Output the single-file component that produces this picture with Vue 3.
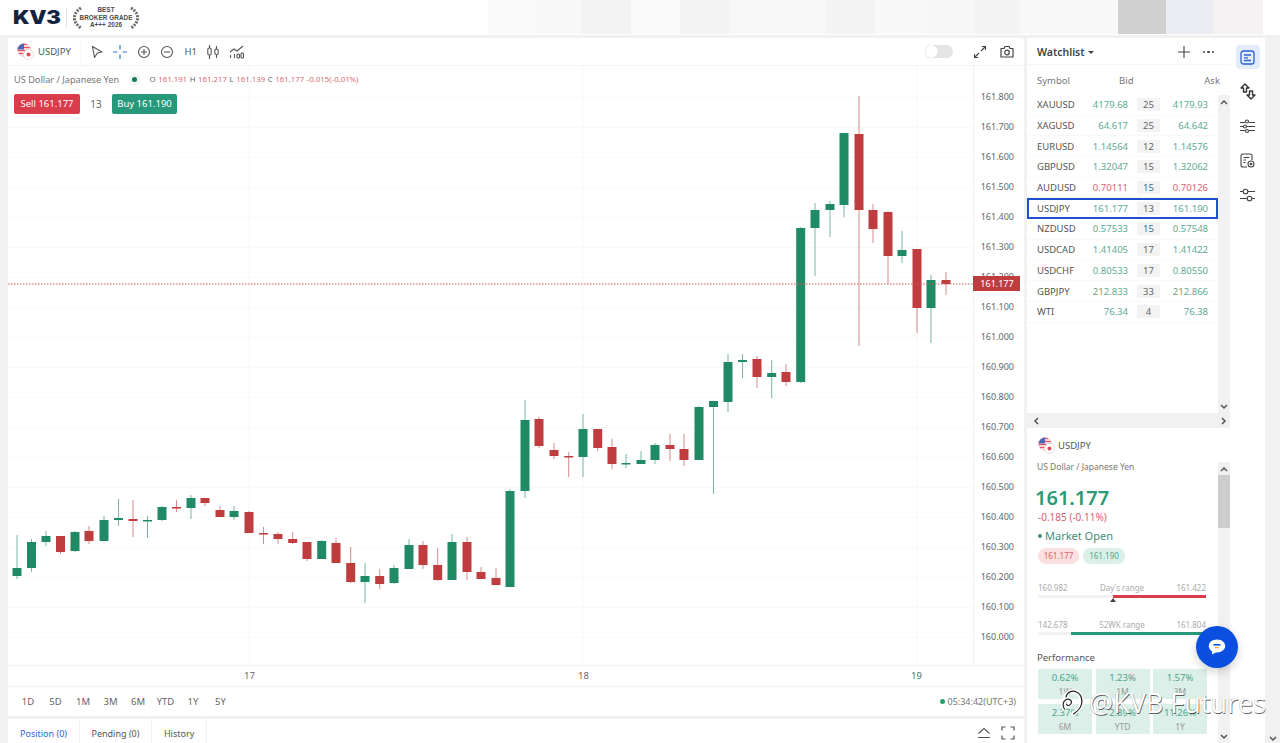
<script setup>
const G = '#1f8a64'
const R = '#c03d3f'
// x, wickTop, wickBottom, bodyTop, bodyBottom, up?
const raw = [
[17,534,578,567,575,1],[31.5,538,571,541,567,1],[46,530,545,535,541,1],[60.5,535,553,535,551,0],
[75,530,551,531,550,1],[89,525,543,530,540,0],[104,515,540,519,540,1],[118.5,498,525,517,519,1],
[133,499,536,518,520,0],[147.5,515,537,519,520,1],[162,505,520,506,519,1],[176.5,499,511,506,507,0],
[191,494,518,497,507,1],[205,497,505,497,502,0],[220,505,516,509,516,0],[234,505,519,510,516,1],
[249,510,532,511,532,0],[263.5,526,543,532,533,0],[278,531,543,533,538,0],[292.7,531,543,538,542,0],
[307,541,560,541,558,0],[321.7,539,558,540,558,1],[336,537,562,542,562,0],[350.7,546,582,562,581,0],
[365,562,602,575,581,1],[379.7,568,588,575,583,0],[394,564,583,567,582,1],[409,538,568,544,568,1],
[423,540,568,544,564,0],[437.7,547,580,564,579,0],[452,533,579,541,579,1],[467,536,579,541,571,0],
[481,566,578,571,578,0],[496,567,584,577,584,0],[510,488,586,490,586,1],[525,399,497,419,490,1],
[539,416,447,418,445,0],[554,442,458,449,455,0],[568.7,451,476,455,456,0],[583,413,476,428,456,1],
[597.7,428,450,428,447,0],[612,438,468,446,463,0],[626,453,467,462,463,1],[641,450,463,459,463,1],
[655,442,463,444,459,1],[670,433,460,444,448,0],[684,433,465,448,459,0],[699,405,459,406,459,1],
[713.5,400,493,400,406,1],[728,353,411,361,401,1],[742.5,353,377,359,361,1],[757,355,387,358,376,0],
[771.7,359,397,372,376,1],[786,363,385,371,381,0],[800.7,226,382,227,381,1],[815,202,275,209,227,1],
[830,200,236,203,209,1],[844,132,216,132,204,1],[859,95,345,133,209,0],[873,203,242,209,228,0],
[888,210,283,211,255,0],[902,230,262,249,255,1],[917,248,332,248,307,0],[931,274,342,279,307,1],
[946,271,294,279,283,0],
]
const candles = raw.map(([x, wt, wb, bt, bb, up]) => ({
  x, wt, wb, bt, h: Math.max(bb - bt, 1.5), color: up ? G : R,
}))
const prices = ['161.800','161.700','161.600','161.500','161.400','161.300','161.200','161.100','161.000','160.900','160.800','160.700','160.600','160.500','160.400','160.300','160.200','160.100','160.000']
  .map((t, i) => ({ t, y: 96 + i * 30 }))
const vgrid = [249, 583, 917]
const rows = [
  ['XAUUSD','4179.68','25','4179.93','g'],['XAGUSD','64.617','25','64.642','g'],
  ['EURUSD','1.14564','12','1.14576','g'],['GBPUSD','1.32047','15','1.32062','g'],
  ['AUDUSD','0.70111','15','0.70126','r'],['USDJPY','161.177','13','161.190','g'],
  ['NZDUSD','0.57533','15','0.57548','g'],['USDCAD','1.41405','17','1.41422','g'],
  ['USDCHF','0.80533','17','0.80550','g'],['GBPJPY','212.833','33','212.866','g'],
  ['WTI','76.34','4','76.38','g'],
]
const perf = [['0.62%','1W'],['1.23%','1M'],['1.57%','3M'],['2.37%','6M'],['2.89%','YTD'],['11.26%','1Y']]
const ranges = ['1D','5D','1M','3M','6M','YTD','1Y','5Y']
const patches = [
  ['#fafafa',47],['#f8f8f8',46],['#f3f3f3',50],['#f9faf9',49],['#f4f4f4',50],['#f8f8f8',96],['#f4f4f4',49],
  ['#f9f9f9',52],['#f6f7f6',46],['#f4f4f4',47],['#f8f8f8',98],['#cfd0cf',48],['#ecedf2',48],['#f5f2f3',49],
]
</script>

<template>
  <div class="page">
    <header class="head">
      <div class="brand">
        <span class="logo"><span class="logo-t">KV3</span></span>
        <span class="brand-sep"></span>
        <svg class="wreath" width="10" height="24" viewBox="0 0 10 24">
          <path d="M8 2C3 5 1 9 1.500 13 2 17 5 20 8 22" fill="none" stroke="#6d6d6d" stroke-width="3" stroke-dasharray="2 1.200"/>
        </svg>
        <span class="badge"><b>BEST</b><b>BROKER GRADE</b><b>A+++ 2026</b></span>
        <svg class="wreath" width="10" height="24" viewBox="0 0 10 24">
          <path d="M2 2C7 5 9 9 8.500 13 8 17 5 20 2 22" fill="none" stroke="#6d6d6d" stroke-width="3" stroke-dasharray="2 1.200"/>
        </svg>
      </div>
      <div class="patches">
        <i v-for="(p, i) in patches" :key="i" :style="{ background: p[0], width: p[1] + 'px' }"></i>
      </div>
    </header>

    <main class="main">
      <section class="left">
        <div class="chart-card">
          <div class="toolbar">
            <svg class="flag" width="17" height="17" viewBox="0 0 17 17">
              <defs><clipPath id="fc"><circle cx="7" cy="7" r="6.500"/></clipPath></defs>
              <g clip-path="url(#fc)">
                <rect width="14" height="14" fill="#e8505b"/>
                <path d="M0 3h14M0 6h14M0 9h14M0 12h14" stroke="#fff" stroke-width="1.300"/>
                <rect width="7" height="6.500" fill="#4a66b8"/>
              </g>
              <circle cx="11.500" cy="11.500" r="5" fill="#fff" stroke="#e2d6d6" stroke-width=".8"/>
              <circle cx="11.500" cy="11.500" r="2" fill="#d94b55"/>
            </svg>
            <span class="sym">USDJPY</span>
            <span class="tool-sep"></span>
            <svg class="ti" width="14" height="14" viewBox="0 0 14 14" fill="none" stroke="#555" stroke-width="1.100" stroke-linejoin="round">
              <path d="M2.500 1.500 12 7 7.300 8 4.500 12.500z"/>
            </svg>
            <svg class="ti" width="14" height="14" viewBox="0 0 14 14" fill="none" stroke="#3b6fd8" stroke-width="1.200">
              <path d="M7 0v4.500M7 9.500V14M0 7h4.500M9.500 7H14"/>
            </svg>
            <svg class="ti" width="14" height="14" viewBox="0 0 14 14" fill="none" stroke="#555" stroke-width="1.100">
              <circle cx="7" cy="7" r="5.500"/><path d="M4 7h6M7 4v6"/>
            </svg>
            <svg class="ti" width="14" height="14" viewBox="0 0 14 14" fill="none" stroke="#555" stroke-width="1.100">
              <circle cx="7" cy="7" r="5.500"/><path d="M4 7h6"/>
            </svg>
            <span class="h1">H1</span>
            <svg class="ti" width="14" height="14" viewBox="0 0 14 14" fill="none" stroke="#555" stroke-width="1.100">
              <path d="M3.500 0v14M10.500 1v12"/><rect x="1.800" y="3" width="3.400" height="7" rx="1.500" fill="#fff"/><rect x="8.800" y="4" width="3.400" height="5.500" rx="1.500" fill="#fff"/>
            </svg>
            <svg class="ti" width="16" height="16" viewBox="0 0 16 16" fill="none" stroke="#555" stroke-width="1.100">
              <path d="M1 8l4-3 3 2 6-5"/><path d="M1.500 14v-3M5.500 14v-4"/><rect x="8" y="10" width="2.500" height="4" rx="1"/><rect x="12" y="9" width="2.500" height="5" rx="1"/>
            </svg>
            <span class="grow"></span>
            <span class="toggle"><span class="knob"></span></span>
            <svg class="expand" width="14" height="14" viewBox="0 0 14 14" fill="none" stroke="#444" stroke-width="1.100">
              <path d="M8 6l4.500-4.500M9 1.500h3.500V5M6 8l-4.500 4.500M5 12.500H1.500V9"/>
            </svg>
            <svg class="camera" width="14" height="13" viewBox="0 0 14 13" fill="none" stroke="#444" stroke-width="1.200">
              <path d="M1 3.500h3L5 1.500h4l1 2h3v8.500H1z" stroke-linejoin="round"/><circle cx="7" cy="7.500" r="2.300"/>
            </svg>
          </div>

          <div class="plot">
            <svg class="plot-svg" width="1016" height="599" viewBox="8 65 1016 599">
              <line v-for="x in vgrid" :key="x" :x1="x" :x2="x" y1="65" y2="664" stroke="#f7f7f7"/>
              <line v-for="p in prices" :key="p.y" x1="8" x2="973" :y1="p.y + .5" :y2="p.y + .5" stroke="#f9f9f9"/>
              <line x1="973.500" x2="973.500" y1="65" y2="664" stroke="#f1f1f1"/>
              <g v-for="(c, i) in candles" :key="i">
                <line :x1="c.x" :x2="c.x" :y1="c.wt" :y2="c.wb" :stroke="c.color" stroke-width="1" opacity=".6"/>
                <rect :x="c.x - 4.500" :y="c.bt" width="9" :height="c.h" :fill="c.color"/>
              </g>
              <line x1="8" x2="973" y1="283" y2="283" stroke="#d4555c" stroke-width="1" stroke-dasharray="1.500 1.500"/>
              <text v-for="p in prices" :key="p.t" x="1014" :y="p.y + 3" text-anchor="end" class="price">{{ p.t }}</text>
              <rect x="973" y="275" width="47" height="15" fill="#c03d3f"/>
              <text x="997" y="286" text-anchor="middle" class="tag">161.177</text>
            </svg>
            <div class="legend">
              <span class="legend-name">US Dollar / Japanese Yen</span>
              <span class="legend-dot"></span>
              <span class="ohlc"><b>O</b> 161.191 <b>H</b> 161.217 <b>L</b> 161.139 <b>C</b> 161.177 -0.015(-0.01%)</span>
            </div>
            <div class="trade">
              <span class="btn sell">Sell 161.177</span>
              <span class="spread">13</span>
              <span class="btn buy">Buy 161.190</span>
            </div>
          </div>

          <div class="xaxis">
            <span class="xl x17">17</span><span class="xl x18">18</span><span class="xl x19">19</span>
          </div>

          <div class="rangebar">
            <span v-for="r in ranges" :key="r" class="range">{{ r }}</span>
            <span class="grow"></span>
            <span class="live"></span>
            <span class="clock">05:34:42(UTC+3)</span>
          </div>
        </div>

        <div class="bottom">
          <span class="tab active">Position (0)</span>
          <span class="tab">Pending (0)</span>
          <span class="tab">History</span>
          <span class="grow"></span>
          <svg class="bicon" width="14" height="12" viewBox="0 0 14 12" fill="none" stroke="#555" stroke-width="1.100">
            <path d="M1.500 6.500 7 1.500l5.500 5M1 10.500h12"/>
          </svg>
          <svg class="bicon last" width="14" height="14" viewBox="0 0 14 14" fill="none" stroke="#555" stroke-width="1.200">
            <path d="M1 4.500V1h3.500M9.500 1H13v3.500M13 9.500V13H9.500M4.500 13H1V9.500"/>
          </svg>
        </div>
      </section>

      <section class="right">
        <div class="watch">
          <div class="watch-head">
            <span class="watch-title">Watchlist</span>
            <span class="caret"></span>
            <span class="grow"></span>
            <svg width="12" height="12" viewBox="0 0 12 12" stroke="#444" stroke-width="1.100"><path d="M6 0v12M0 6h12"/></svg>
            <span class="dots"><i></i><i></i><i></i></span>
          </div>
          <div class="cols">
            <span>Symbol</span><span class="col-bid">Bid</span><span class="col-ask">Ask</span>
          </div>
          <div class="watch-body">
            <div class="rows">
              <div v-for="r in rows" :key="r[0]" class="row" :class="{ sel: r[0] === 'USDJPY' }">
                <span class="s">{{ r[0] }}</span>
                <span class="n" :class="r[4]">{{ r[1] }}</span>
                <span class="chip">{{ r[2] }}</span>
                <span class="n" :class="r[4]">{{ r[3] }}</span>
              </div>
            </div>
            <div class="vbar">
              <svg class="up" width="8" height="6" viewBox="0 0 8 6" fill="none" stroke="#555" stroke-width="1.500"><path d="M1 5l3-3 3 3"/></svg>
              <svg width="8" height="6" viewBox="0 0 8 6" fill="none" stroke="#555" stroke-width="1.500"><path d="M1 1l3 3 3-3"/></svg>
            </div>
          </div>
          <div class="hbar">
            <svg width="6" height="8" viewBox="0 0 6 8" fill="none" stroke="#555" stroke-width="1.500"><path d="M5 1 2 4l3 3"/></svg>
            <svg width="6" height="8" viewBox="0 0 6 8" fill="none" stroke="#555" stroke-width="1.500"><path d="M1 1l3 3-3 3"/></svg>
          </div>
        </div>

        <div class="detail">
          <div class="detail-top">
            <svg class="flag" width="17" height="17" viewBox="0 0 17 17">
              <defs><clipPath id="fd"><circle cx="7" cy="7" r="6.500"/></clipPath></defs>
              <g clip-path="url(#fd)">
                <rect width="14" height="14" fill="#e8505b"/>
                <path d="M0 3h14M0 6h14M0 9h14M0 12h14" stroke="#fff" stroke-width="1.300"/>
                <rect width="7" height="6.500" fill="#4a66b8"/>
              </g>
              <circle cx="11.500" cy="11.500" r="5" fill="#fff" stroke="#e2d6d6" stroke-width=".8"/>
              <circle cx="11.500" cy="11.500" r="2" fill="#d94b55"/>
            </svg>
            <span class="sym">USDJPY</span>
          </div>
          <div class="detail-scroll">
            <div class="detail-body">
              <div class="full">US Dollar / Japanese Yen</div>
              <div class="big">161.177</div>
              <div class="chg">-0.185 (-0.11%)</div>
              <div class="open"><i></i>Market Open</div>
              <div class="pills"><span class="pill pr">161.177</span><span class="pill pg">161.190</span></div>
              <div class="range-labels r1"><span>160.982</span><span>Day's range</span><span>161.422</span></div>
              <div class="track t1"><i class="fill red"></i><i class="mark"></i></div>
              <div class="range-labels r2"><span>142.678</span><span>52WK range</span><span>161.804</span></div>
              <div class="track t2"><i class="fill green"></i></div>
              <div class="perf-title">Performance</div>
              <div class="perf">
                <div v-for="p in perf" :key="p[1]" class="cell"><span class="pv">{{ p[0] }}</span><span class="pl">{{ p[1] }}</span></div>
              </div>
            </div>
            <div class="dbar">
              <svg class="up" width="8" height="6" viewBox="0 0 8 6" fill="none" stroke="#555" stroke-width="1.500"><path d="M1 5l3-3 3 3"/></svg>
              <span class="thumb"></span>
              <span class="grow"></span>
              <svg class="dn" width="8" height="6" viewBox="0 0 8 6" fill="none" stroke="#555" stroke-width="1.500"><path d="M1 1l3 3 3-3"/></svg>
            </div>
          </div>
        </div>
      </section>

      <aside class="side">
        <span class="side-btn active">
          <svg width="15" height="15" viewBox="0 0 15 15" fill="none" stroke="#2d5fd8" stroke-width="1.300">
            <rect x="1" y="1" width="13" height="13" rx="2.500"/><path d="M4 5h7M4 7.800h4M4 10.500h7"/>
          </svg>
        </span>
        <span class="side-btn">
          <svg width="16" height="17" viewBox="0 0 16 17" fill="none" stroke="#333" stroke-width="1.400" stroke-linejoin="round">
            <path d="M5 1 1 5h2.500v4h3V5H9zM11 16l4-4h-2.500V8h-3v4H7z"/>
          </svg>
        </span>
        <span class="side-btn">
          <svg width="15" height="15" viewBox="0 0 15 15" fill="none" stroke="#444" stroke-width="1.100">
            <path d="M0 3.500h5M9 3.500h6M0 7.500h3M7 7.500h8M0 11.500h5M9 11.500h6"/><circle cx="7" cy="2.500" r="1.500"/><circle cx="5" cy="7.500" r="1.500"/><circle cx="7" cy="12" r="1.500"/>
          </svg>
        </span>
        <span class="side-btn">
          <svg width="15" height="15" viewBox="0 0 15 15" fill="none" stroke="#444" stroke-width="1.100">
            <path d="M7 14H3a2 2 0 0 1-2-2V3a2 2 0 0 1 2-2h7a2 2 0 0 1 2 2v4"/><path d="M3.500 4.500h6M3.500 7h2.500M3.500 9.500h2"/><circle cx="11" cy="11" r="3"/><circle cx="11" cy="11" r=".8" fill="#444"/>
          </svg>
        </span>
        <span class="side-btn">
          <svg width="15" height="14" viewBox="0 0 15 14" fill="none" stroke="#444" stroke-width="1.100">
            <path d="M0 3.500h3M8 3.500h7M0 10.500h7M12 10.500h3"/><circle cx="5.500" cy="3.500" r="2.300"/><circle cx="9.500" cy="10.500" r="2.300"/>
          </svg>
        </span>
      </aside>

      <div class="page-bar">
        <svg width="8" height="6" viewBox="0 0 8 6" fill="none" stroke="#555" stroke-width="1.500"><path d="M1 1l3 3 3-3"/></svg>
      </div>
    </main>

    <span class="chat">
      <svg width="18" height="16" viewBox="0 0 18 16">
        <path d="M9 0.500C4.300.5.800 3.300.800 7c0 2.200 1.200 4 3.200 5.200L4 15.500l3.800-2.100H9c4.700 0 8.200-2.800 8.200-6.400S13.700.5 9 .5z" fill="#fff"/>
        <path d="M5.500 5.800h7" stroke="#0a4fe0" stroke-width="1.600"/>
        <path d="M7 8.600h4" stroke="#f5b23a" stroke-width="1.400"/>
      </svg>
    </span>
    <div class="mark-w">
      <svg width="26" height="30" viewBox="0 0 26 30" fill="none" stroke-linecap="round">
        <path d="M7 10c1-6 7-8 11-6 5 2 6 8 5 12-1 5-5 8-8 10" stroke="#fff" stroke-width="4"/>
        <path d="M6 21c-2-3-2-7 1-9 2-1.500 6-1 6 2 0 3-4 5-5 2" stroke="#fff" stroke-width="3.500"/>
        <path d="M8 9c1-5 6-7 10.500-5 5 2 6 8 5 12-1 5-5 8-8 10" stroke="#222" stroke-width="1.200"/>
        <path d="M6.500 21c-2-3-2-7 1-9 2-1.500 6-1 6 2 0 3-4 5-5 2" stroke="#222" stroke-width="1.200"/>
      </svg>
      <span>@KVB Futures</span>
    </div>
  </div>
</template>

<style>
html, body { margin: 0; background: #f1f1f1; overflow: hidden; }
</style>

<style scoped>
.page {
  width: 1280px; height: 743px; position: relative; overflow: hidden;
  display: flex; flex-direction: column; background: #f1f1f1;
  font-family: "Noto Sans", "Open Sans", sans-serif; color: #444;
}
.grow { flex: 1; }
.head { height: 35px; background: #fff; display: flex; align-items: stretch; flex: none; }
.brand { display: flex; align-items: center; padding-left: 13px; width: 488px; box-sizing: border-box; }
.logo { width: 47px; display: block; }
.logo-t { display: inline-block; font: 900 18.500px/1 Inter, sans-serif; color: #14233f; transform: scaleX(1.180); transform-origin: left center; letter-spacing: -.3px; }
.brand-sep { width: 1px; height: 20px; background: #e6e6e6; margin: 0 6px 0 6px; }
.wreath { display: block; }
.badge { display: flex; flex-direction: column; align-items: center; width: 46px; font: 700 6.300px/7.800px "Liberation Sans", sans-serif; color: #4a4a4a; letter-spacing: .1px; white-space: nowrap; }
.badge b { font-weight: 700; }
.patches { display: flex; }
.patches i { display: block; height: 34px; }

.main { flex: 1; display: flex; padding-top: 3px; min-height: 0; }
.left { width: 1016px; margin-left: 8px; display: flex; flex-direction: column; flex: none; }
.chart-card { height: 678px; flex: none; background: #fff; display: flex; flex-direction: column; border-radius: 2px 2px 3px 3px; }
.toolbar { height: 27px; border-bottom: 1px solid #f3f3f3; display: flex; align-items: center; padding-left: 9px; flex: none; }
.flag { display: block; flex: none; }
.sym { font-size: 9.500px; color: #555; margin-left: 4px; }
.tool-sep { width: 1px; height: 27px; margin: 0 9px 0 9px; background: #f7f7f7; }
.ti { display: block; margin-right: 9.400px; flex: none; }
.h1 { font-size: 9.500px; color: #555; margin-right: 9.500px; width: 13px; padding-left: 1px; box-sizing: border-box; white-space: nowrap; }
.toggle { width: 28px; height: 13px; border-radius: 7px; background: #e4e4e4; position: relative; margin-right: 20px; }
.knob { position: absolute; left: 0; top: 0; width: 13px; height: 13px; border-radius: 50%; background: #fff; box-shadow: 0 0 1px #bbb; }
.expand { display: block; margin-right: 13px; }
.camera { display: block; margin-right: 10px; }

.plot { height: 599px; position: relative; flex: none; }
.plot-svg { display: block; }
.price { font-size: 9px; fill: #666; font-family: "Noto Sans", sans-serif; }
.tag { font-size: 9px; fill: #fff; font-family: "Noto Sans", sans-serif; }
.legend { position: absolute; left: 6px; top: 6px; display: flex; align-items: center; height: 14px; white-space: nowrap; }
.legend-name { font-size: 9.200px; color: #777; width: 117.500px; }
.legend-dot { width: 5px; height: 5px; border-radius: 50%; background: #157a5a; box-shadow: 0 0 0 3px #f0f5f3; margin-right: 13px; }
.ohlc { font-size: 7.800px; color: #d86a72; word-spacing: .6px; }
.ohlc b { color: #666; font-weight: 400; }
.trade { position: absolute; left: 6px; top: 28px; display: flex; align-items: center; }
.btn { width: 66px; height: 20px; border-radius: 2px; color: #fff; font-size: 9.500px; line-height: 20px; text-align: center; }
.sell { background: #d93c4b; }
.buy { background: #27997a; width: 65px; }
.spread { width: 32px; text-align: center; font-size: 10px; color: #666; }

.xaxis { height: 22px; border-top: 1px solid #f0f0f0; border-bottom: 1px solid #f0f0f0; position: relative; flex: none; box-sizing: border-box; }
.xl { position: absolute; top: 3px; font-size: 9.500px; color: #666; }
.x17 { left: 236px; } .x18 { left: 570px; } .x19 { left: 903px; }
.rangebar { flex: 1; display: flex; align-items: center; padding: 0 8px 0 6.250px; }
.range { font-size: 9.500px; color: #666; width: 27.500px; text-align: center; flex: none; }
.live { width: 5px; height: 5px; border-radius: 50%; background: #27a06c; margin-right: 3px; }
.clock { font-size: 9px; color: #777; }

.bottom { margin-top: 3px; flex: 1; min-height: 0; background: #fff; display: flex; align-items: stretch; overflow: hidden; }
.tab { font-size: 9px; color: #555; line-height: 29px; padding: 0 11.500px 0 12px; border-right: 1px solid #f0f0f0; }
.tab.active { color: #2d5fd8; }
.bicon { align-self: center; margin-right: 10px; margin-top: 4px; }
.bicon.last { margin-right: 9px; }

.right { width: 203px; margin-left: 3px; display: flex; flex-direction: column; flex: none; }
.watch { height: 390px; flex: none; display: flex; flex-direction: column; background: #f1f1f1; }
.watch-head { height: 27px; background: #fff; display: flex; align-items: center; padding: 2px 16px 0 10px; flex: none; border-bottom: 1px solid #f6f6f6; box-sizing: border-box; }
.watch-title { font-size: 10.500px; font-weight: 600; color: #444; }
.caret { border: 3px solid transparent; border-top: 3.500px solid #444; border-bottom: 0; margin-left: 3px; }
.dots { display: flex; gap: 2px; margin-left: 13px; }
.dots i { width: 2.500px; height: 2.500px; background: #444; border-radius: 50%; }
.cols { height: 30px; background: #fff; display: flex; align-items: center; font-size: 9.500px; color: #777; padding-left: 10px; flex: none; position: relative; }
.col-bid { position: absolute; left: 92px; } .col-ask { position: absolute; right: 10px; }
.watch-body { flex: 1; display: flex; min-height: 0; }
.rows { width: 191px; background: #fff; padding-top: 0; }
.row { height: 20.700px; display: grid; grid-template-columns: 49px 42px 32px 48px; align-items: center; padding-left: 10px; box-sizing: border-box; font-size: 9.500px; border-bottom: 1px solid #f8f8f8; }
.row.sel { outline: 2px solid #1f4fd0; outline-offset: -2px; border-bottom: 0; }
.s { color: #555; }
.n { text-align: right; }
.n.g { color: #5cab92; } .n.r { color: #d8626f; }
.chip { justify-self: end; width: 23px; height: 13px; line-height: 13px; background: #f3f3f3; text-align: center; color: #666; }
.vbar { width: 12px; background: #f1f1f1; display: flex; flex-direction: column; align-items: center; justify-content: space-between; padding: 4px 0 3px; box-sizing: border-box; }
.hbar { height: 15px; background: #f1f1f1; display: flex; align-items: center; justify-content: space-between; padding: 0 3px 0 6px; flex: none; }
.detail { flex: 1; background: #fff; border-radius: 3px 3px 0 0; display: flex; flex-direction: column; min-height: 0; }
.detail-top { height: 34px; display: flex; align-items: center; padding-left: 11px; flex: none; }
.detail-top .sym { margin-left: 3px; }
.detail-scroll { flex: 1; display: flex; min-height: 0; }
.detail-body { width: 191px; padding-left: 10px; box-sizing: border-box; overflow: hidden; }
.full { font-size: 8.500px; color: #777; margin-top: -1px; line-height: 12px; }
.big { font-size: 20px; font-weight: 600; color: #2b9a76; line-height: 24px; margin: 13px 0 0 -2px; }
.chg { font-size: 10px; color: #d8626f; line-height: 13px; margin-top: 1px; padding-left: 1px; }
.open { font-size: 11px; color: #3e8f76; line-height: 16px; margin-top: 4px; display: flex; align-items: center; padding-left: 1px; }
.open i { width: 4px; height: 4px; border-radius: 50%; background: #3e8f76; margin-right: 3px; }
.pills { display: flex; gap: 4px; margin-top: 4px; padding-left: 1px; }
.pill { height: 16px; line-height: 16px; border-radius: 8px; font-size: 8px; text-align: center; width: 41px; }
.pr { background: #fbdfe1; color: #d8626f; }
.pg { background: #dcefe8; color: #4da78a; width: 42px; }
.range-labels { display: flex; justify-content: space-between; font-size: 8px; color: #aaa; width: 169px; padding-left: 1px; line-height: 11px; box-sizing: border-box; }
.r1 { margin-top: 18px; } .r2 { margin-top: 21px; }
.track { height: 3px; width: 168px; margin-left: 1px; background: #f2f2f2; position: relative; margin-top: 2px; }
.fill { position: absolute; top: 0; bottom: 0; right: 0; }
.red { left: 75px; background: #d93c4b; } .green { left: 33px; background: #27997a; }
.mark { position: absolute; left: 72px; top: 3px; border: 3px solid transparent; border-top: 0; border-bottom: 4px solid #444; }
.perf-title { font-size: 9.500px; color: #555; margin-top: 16px; line-height: 13px; }
.perf { display: grid; grid-template-columns: 54px 54px 54px; gap: 5px 3.500px; margin-top: 4.500px; padding-left: 1px; }
.cell { height: 30px; background: #dcefe8; display: flex; flex-direction: column; align-items: center; }
.pv { font-size: 9.500px; color: #4da78a; line-height: 14px; margin-top: 2px; }
.pl { font-size: 8.500px; color: #999; line-height: 12px; margin-top: 1px; }
.dbar { width: 12px; margin-top: 0; background: #f1f1f1; display: flex; flex-direction: column; align-items: center; padding: 4px 0 3px; box-sizing: border-box; }
.thumb { width: 12px; height: 53px; background: #cdcdcd; margin-top: 3px; }

.side { width: 35px; background: #fff; display: flex; flex-direction: column; align-items: center; padding-top: 7px; flex: none; }
.side-btn { width: 24px; height: 24px; border-radius: 4px; display: flex; align-items: center; justify-content: center; margin-bottom: 10.500px; }
.side-btn.active { background: #e3ecfb; }
.page-bar { flex: 1; background: #f1f1f1; display: flex; align-items: flex-end; justify-content: center; padding-bottom: 1px; }

.chat { position: absolute; left: 1196px; top: 626px; width: 42px; height: 42px; border-radius: 50%; background: #0a4fe0; box-shadow: 0 4px 10px rgba(0,0,0,.18); display: flex; align-items: center; justify-content: center; }
.mark-w { position: absolute; left: 1058px; top: 688px; display: flex; align-items: center; gap: 5px; pointer-events: none; }
.mark-w span { font: 400 27px/30px "Open Sans", sans-serif; color: #fff; letter-spacing: 0; text-shadow: .7px .7px 0 rgba(0,0,0,.6), -.4px -.4px 0 rgba(0,0,0,.25); white-space: nowrap; }
</style>
